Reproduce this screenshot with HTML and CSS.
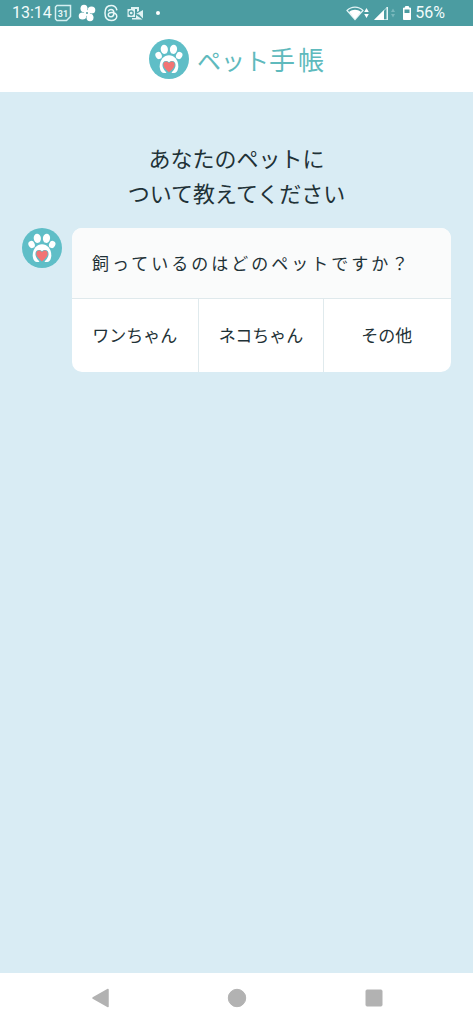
FILE: index.html
```html
<!DOCTYPE html>
<html lang="ja">
<head>
<meta charset="utf-8">
<meta name="viewport" content="width=device-width, initial-scale=1">
<title>ペット手帳</title>
<link rel="stylesheet" href="styles.css">
</head>
<body>
<svg class="defs" width="0" height="0" aria-hidden="true">
  <symbol id="paw" viewBox="0 0 40 40">
    <circle cx="20" cy="20" r="20" fill="#5fbec7"/>
    <g fill="#fff">
      <ellipse cx="15.300" cy="10.300" rx="3.600" ry="4.600" transform="rotate(-8 15.3 10.3)"/>
      <ellipse cx="24.500" cy="10.300" rx="3.600" ry="4.600" transform="rotate(8 24.5 10.3)"/>
      <ellipse cx="9.600" cy="16.500" rx="3.100" ry="3.700" transform="rotate(-25 9.6 16.5)"/>
      <ellipse cx="30.200" cy="16.500" rx="3.100" ry="3.700" transform="rotate(25 30.2 16.5)"/>
      <path d="M20 16.300c-5 0-9.300 4.500-9.300 11 0 3.700 1.600 6.700 4 6.700h10.600c2.400 0 4-3 4-6.700 0-6.500-4.300-11-9.300-11z"/>
    </g>
    <path d="M17.800 35c0-2-3.800-4.300-4.300-8-.4-3 1-5 3.300-5 1.300 0 2.400.5 3.200 1.300.8-.8 1.900-1.300 3.200-1.300 2.300 0 3.700 2 3.300 5-.5 3.700-4.300 6-4.300 8z" fill="#5fbec7"/>
    <path d="M20 33.500c-1-1.500-5.700-4.200-5.700-7.900 0-3.600 4.200-4 5.700-1.300 1.500-2.700 5.700-2.300 5.700 1.300 0 3.700-4.700 6.400-5.700 7.900z" fill="#f27474"/>
  </symbol>
</svg>

<div class="screen">
  <div class="status">
    <div class="status-group">
      <span>13:14</span>
      <div class="icons">
        <svg class="icon" viewBox="0 0 18 18" role="img" aria-label="カレンダー">
          <path d="M3 1.500h13.500v11L12.500 16.500H3L1.500 15V3z" fill="none" stroke="#d5eff1" stroke-width="1.500"/>
          <text x="9" y="12.500" class="cal-day">31</text>
        </svg>
        <svg class="icon" viewBox="0 0 18 18" role="img" aria-label="写真">
          <g fill="#fff"><ellipse cx="6" cy="4.500" rx="3.500" ry="3.800"/><ellipse cx="13.500" cy="6" rx="3.800" ry="3.500"/><ellipse cx="4.500" cy="12" rx="3.800" ry="3.500"/><ellipse cx="12" cy="13.500" rx="3.500" ry="3.800"/><circle cx="9" cy="9" r="3"/></g>
          <circle cx="9" cy="9" r="1" fill="#4b9ca1"/>
        </svg>
        <svg class="icon" viewBox="0 0 18 18" role="img" aria-label="Threads">
          <path d="M14.800 5.700C14 2.800 12 1.500 9.200 1.500 5 1.500 3 4.500 3 9s2 7.500 6.200 7.500c3.300 0 5.600-1.800 5.600-4.200 0-2.800-2.700-4-5.200-3.900-2.200.1-3.400 1-3.300 2.400.1 1.300 1.300 2 2.700 1.900 2-.1 3-1.500 2.900-4C11.800 6.500 10.700 5.500 9 5.500c-1.200 0-2 .5-2.500 1.300" fill="none" stroke="#e9f8f8" stroke-width="1.500" stroke-linecap="round"/>
        </svg>
        <svg class="icon" viewBox="0 0 18 18" role="img" aria-label="メール">
          <path d="M5 3h8v4l-2 1V5H5zM1.500 5h7.500v8H1.500zM10 10l7-4v8.500l-4-4zM10 11l6.500 4.500H6v-1.500h4z" fill="#dff2f3"/>
          <circle cx="5.200" cy="9" r="2" fill="none" stroke="#4b9ca1" stroke-width="1.300"/>
        </svg>
      </div>
      <span class="dot"></span>
    </div>
    <div class="status-group status-right">
      <svg class="wifi" viewBox="0 0 24 18" role="img" aria-label="Wi-Fi">
        <path d="M1 6.500C5.500 2 12.500 2 17 6.500L9 15.500z" fill="none" stroke="#e4f5f6" stroke-width="1.200"/>
        <path d="M3 8C6.500 5 11.500 5 15 8L9 15.200z" fill="#fff"/>
        <path d="M18.200 8L20.500 4 22.800 8zM18.200 10L20.500 14 22.800 10z" fill="#fff"/>
      </svg>
      <svg class="signal" viewBox="0 0 22 18" role="img" aria-label="電波">
        <path d="M1 15.500L13.500 3V15.500z" fill="none" stroke="#b9dfe2"/>
        <path d="M0 16L10 6V16z" fill="#fff"/>
        <path d="M12.500 3h1.500v13h-1.500z" fill="#e4f5f6"/>
        <path d="M17 8L19 4.500 21 8zM17 10L19 13.500 21 10z" fill="#79b8bc"/>
      </svg>
      <svg class="battery" viewBox="0 0 10 18" role="img" aria-label="電池">
        <path d="M3.500 2.500h3v1.500h2V15.500h-7V4h2z" fill="#fff" stroke="#fff" stroke-linejoin="round"/>
        <path d="M2.500 5.500h5v3.500h-5z" fill="#4b9ca1"/>
      </svg>
      <span>56%</span>
    </div>
  </div>

  <header class="brand">
    <svg class="paw" role="img" aria-label="肉球"><use href="#paw"/></svg>
    <span class="brand-name">ペット<span class="brand-kanji">手帳</span></span>
  </header>

  <main class="content">
    <h1 class="title">あなたのペットに<br>ついて教えてください</h1>
    <div class="chat">
      <svg class="paw" aria-hidden="true"><use href="#paw"/></svg>
      <section class="card" aria-labelledby="question">
        <h2 class="question" id="question">飼っているのはどのペットですか？</h2>
        <div class="choices">
          <button class="choice" type="button">ワンちゃん</button>
          <button class="choice" type="button">ネコちゃん</button>
          <button class="choice" type="button">その他</button>
        </div>
      </section>
    </div>
  </main>

  <nav class="navbar" aria-label="システム">
    <button class="nav-button" type="button" aria-label="戻る"><svg class="nav-icon" viewBox="0 0 20 20"><path d="M3 10L18 1.500v17z" stroke-width="1.500" stroke-linejoin="round"/></svg></button>
    <button class="nav-button" type="button" aria-label="ホーム"><svg class="nav-icon" viewBox="0 0 20 20"><circle cx="10" cy="10" r="8.700"/></svg></button>
    <button class="nav-button" type="button" aria-label="履歴"><svg class="nav-icon" viewBox="0 0 20 20"><rect x="2" y="2" width="16" height="16" rx="1"/></svg></button>
  </nav>
</div>
</body>
</html>
```
FILE: styles.css
```css
* {
  box-sizing: border-box;
}

body {
  margin: 0;
  background: #d9ecf4;
  color: #1f3237;
  font-family: "Noto Sans CJK JP", sans-serif;
}

svg {
  display: block;
  flex: none;
}

button {
  margin: 0;
  padding: 0;
  border: 0;
  background: none;
  color: inherit;
  font: inherit;
}

.defs {
  position: absolute;
}

.screen {
  display: flex;
  flex-direction: column;
  min-height: 100vh;
}

.status {
  display: flex;
  justify-content: space-between;
  align-items: center;
  height: 26px;
  padding: 0 28px 0 12px;
  background: #4b9ca1;
  color: #f2fbfb;
  font: 16px/26px Roboto, sans-serif;
}

.status-group {
  display: flex;
  align-items: center;
  gap: 2px;
}

.icons {
  display: flex;
  gap: 6px;
}

.icon {
  width: 18px;
  height: 18px;
}

.cal-day {
  fill: #e4f5f6;
  font: bold 9px Roboto, sans-serif;
  text-anchor: middle;
}

.dot {
  width: 4px;
  height: 4px;
  margin-left: 10px;
  border-radius: 50%;
  background: #fff;
}

.wifi {
  width: 24px;
  height: 18px;
}

.signal {
  width: 22px;
  height: 18px;
  margin-left: 2px;
}

.battery {
  width: 10px;
  height: 18px;
  margin: 0 1px 0 4px;
}

.brand {
  display: flex;
  justify-content: center;
  align-items: center;
  gap: 8px;
  height: 66px;
  background: #fff;
}

.paw {
  width: 40px;
  height: 40px;
}

.brand-name {
  margin-right: -3px;
  color: #5fbabd;
  font-size: 24px;
  line-height: 38px;
}

.brand-kanji {
  font-size: 26px;
  letter-spacing: 3px;
}

.content {
  flex: 1;
  padding: 48px 22px;
}

.title {
  margin: 0 0 18px;
  font-size: 22px;
  font-weight: 400;
  line-height: 35px;
  text-align: center;
}

.chat {
  display: flex;
  align-items: flex-start;
  gap: 10px;
}

.card {
  flex: 1;
  overflow: hidden;
  border-radius: 10px;
  background: #fff;
}

.question {
  margin: 0;
  padding: 21px 0 21px 20px;
  border-bottom: 1px solid #dfe9ec;
  background: #fafbfb;
  font-size: 17px;
  font-weight: 400;
  line-height: 28px;
  letter-spacing: 3px;
}

.choices {
  display: grid;
  grid-template-columns: repeat(3, 1fr);
  padding-right: 2px;
}

.choice {
  padding: 22px 0 23px;
  font-size: 17px;
  line-height: 28px;
}

.choice + .choice {
  border-left: 1px solid #e0eaed;
}

.navbar {
  display: flex;
  justify-content: center;
  gap: 97px;
  padding: 5px 0 6px;
  background: #fff;
}

.nav-button {
  display: grid;
  place-items: center;
  width: 40px;
  height: 40px;
}

.nav-icon {
  width: 20px;
  height: 20px;
  fill: #b2b2b2;
  stroke: #b2b2b2;
  stroke-width: 1;
}
```
